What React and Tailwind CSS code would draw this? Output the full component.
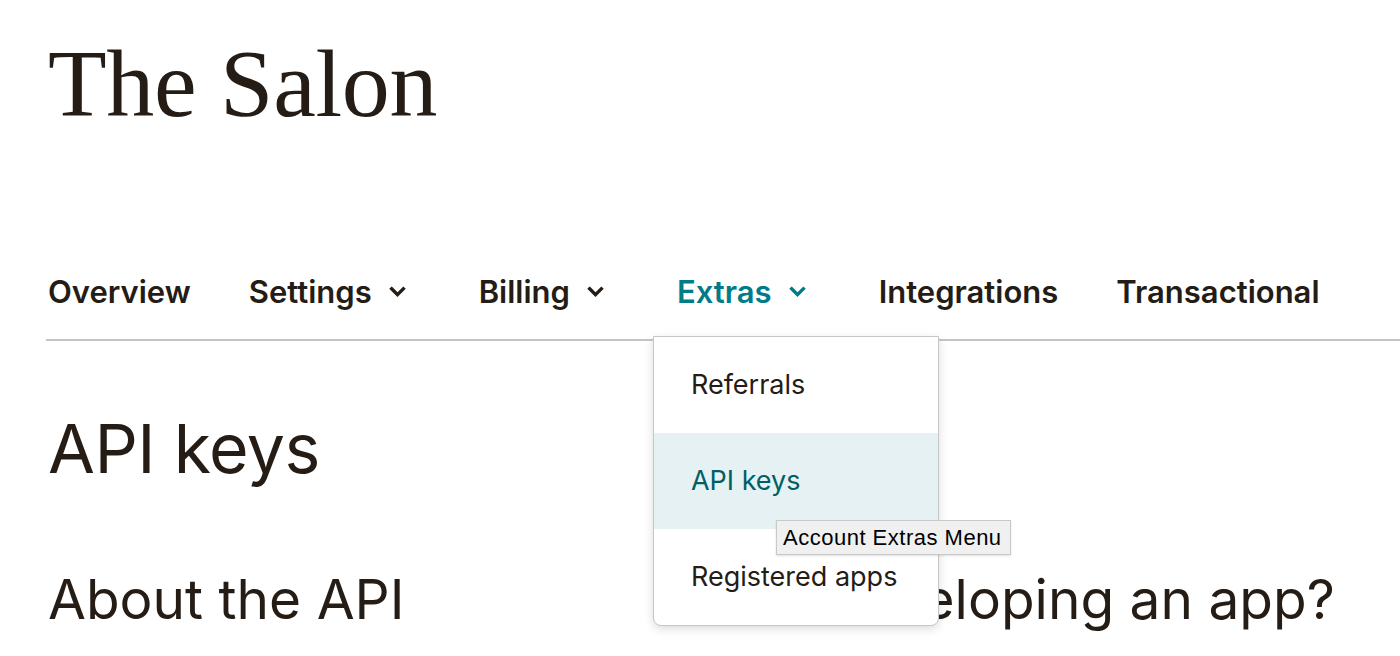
import React from "react";

function Chevron({ className }) {
  return (
    <svg viewBox="0 0 16 16" className={className} fill="none">
      <path d="M2.5 4.5 L8 10 L13.5 4.5" stroke="currentColor" strokeWidth="3.2" strokeLinecap="square" strokeLinejoin="miter" />
    </svg>
  );
}

const navItems = [
  { label: "Overview", chevron: false },
  { label: "Settings", chevron: true },
  { label: "Billing", chevron: true },
  { label: "Extras", chevron: true, active: true },
  { label: "Integrations", chevron: false },
  { label: "Transactional", chevron: false },
];

export default function App() {
  return (
    <div className="relative w-[1400px] h-[656px] overflow-hidden bg-white text-[#241c15] [font-family:Inter,'Noto_Sans',sans-serif]">
      <div className="pl-[46px]">
        <h1 className="pt-[36px] pl-[2px] text-[96px] leading-[96px] [font-family:'Liberation_Serif',serif] font-normal tracking-[-0.3px]">
          The Salon
        </h1>

        <nav className="mt-[141px] relative border-b-2 border-[#c4c4c4] h-[68px] flex items-start pl-[2px]">
          {navItems.map((item) => (
            <div
              key={item.label}
              className={
                "relative flex items-center h-[38px] mr-[58px] " +
                (item.active ? "text-[#007c89]" : "text-[#241c15]")
              }
            >
              <span className="text-[31px] leading-[38px] font-semibold">{item.label}</span>
              {item.chevron && <Chevron className="w-[17px] h-[17px] ml-[17px] mr-[15px]" />}
              {item.active && (
                <div className="absolute left-[-24px] top-[63px] z-10 w-[286px] bg-white border border-[#c6c6c6] rounded-b-[8px] shadow-[0_3px_10px_rgba(0,0,0,0.14)] text-[27px] font-normal">
                  <div className="h-[96px] flex items-center pl-[37px] text-[#241c15]">Referrals</div>
                  <div className="h-[96px] flex items-center pl-[37px] bg-[#e5f1f2] text-[#005f66]">API keys</div>
                  <div className="h-[96px] flex items-center pl-[37px] text-[#241c15]">Registered apps</div>
                </div>
              )}
            </div>
          ))}
        </nav>

        <h2 className="mt-[73px] pl-[2px] text-[68px] leading-[68px] font-normal tracking-[-0.5px]">API keys</h2>

        <div className="mt-[90px] grid grid-cols-2 pl-[2px]">
          <h3 className="text-[55px] leading-[55px] font-normal">About the API</h3>
          <h3 className="text-[55px] leading-[55px] font-normal pl-[98px]">Developing an app?</h3>
        </div>
      </div>

      <div className="absolute left-[776px] top-[520px] w-[235px] h-[35px] z-20 bg-[#f0f0f0] border border-[#c9c9c9] shadow-[0_1px_2px_rgba(0,0,0,0.12)] flex items-center pl-[6px] text-[22px] tracking-[0.5px] text-black [font-family:'Liberation_Sans',Arial,sans-serif]">
        Account Extras Menu
      </div>
    </div>
  );
}
